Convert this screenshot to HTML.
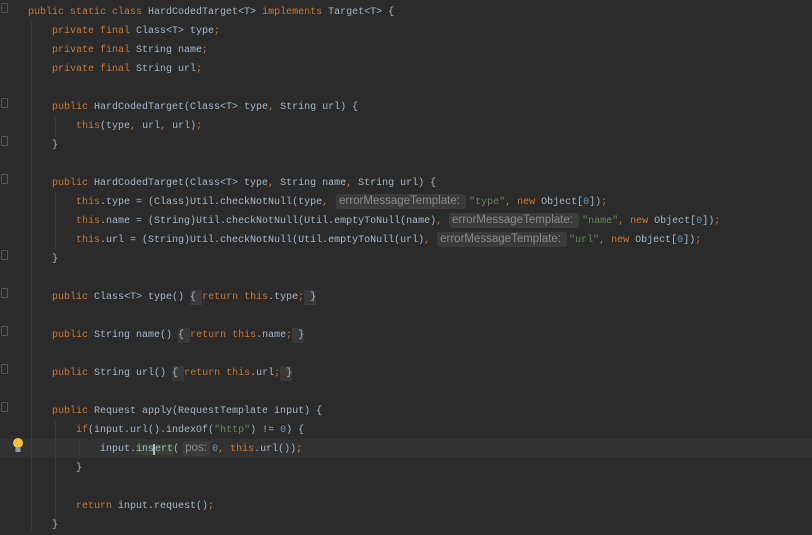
<!DOCTYPE html>
<html><head><style>
body{margin:0;width:812px;height:530px;background:#2b2b2b;overflow:hidden;position:relative;font-family:"Liberation Mono",monospace;font-size:10px;color:#a9b7c6}
.l{position:absolute;left:28px;height:19px;line-height:19px;white-space:pre}
.k{color:#cc7832}.s{color:#6a8759}.n{color:#6897bb}
.h{display:inline-block;background:#3b3b3b;color:#8a8a8a;font-family:"Liberation Sans",sans-serif;font-size:11.5px;line-height:15px;height:15px;border-radius:3px;padding:0 3px;vertical-align:middle;text-align:left;margin:0 3px 0 2px}
.f{background:#3a3a3a;padding:2px 0}
.g{position:absolute;width:1px;background:#3a3a3a}
.fi{position:absolute;left:1px;width:5px;height:8px;border:1px solid #555;border-radius:1px}
</style></head><body>
<div style="position:absolute;left:0;top:439px;width:812px;height:19px;background:#323232"></div>
<div class="g" style="left:31px;top:22px;height:508px"></div>
<div class="g" style="left:55px;top:117px;height:20px"></div>
<div class="g" style="left:55px;top:193px;height:57px"></div>
<div class="g" style="left:55px;top:421px;height:99px"></div>
<div class="g" style="left:79px;top:440px;height:18px"></div>
<div class="fi" style="top:3px"></div><div class="fi" style="top:98px"></div><div class="fi" style="top:136px"></div><div class="fi" style="top:174px"></div><div class="fi" style="top:250px"></div><div class="fi" style="top:288px"></div><div class="fi" style="top:326px"></div><div class="fi" style="top:364px"></div><div class="fi" style="top:402px"></div>
<svg style="position:absolute;left:11px;top:437px" width="14" height="17"><circle cx="7" cy="6" r="5" fill="#f0c040"/><rect x="4.5" y="10" width="5" height="5" fill="#999"/></svg>

<div class="l" style="top:3px"><span class="k">public static class </span>HardCodedTarget&lt;T&gt; <span class="k">implements </span>Target&lt;T&gt; {</div>
<div class="l" style="top:22px">    <span class="k">private final </span>Class&lt;T&gt; type<span class="k">;</span></div>
<div class="l" style="top:41px">    <span class="k">private final </span>String name<span class="k">;</span></div>
<div class="l" style="top:60px">    <span class="k">private final </span>String url<span class="k">;</span></div>
<div class="l" style="top:98px">    <span class="k">public </span>HardCodedTarget(Class&lt;T&gt; type<span class="k">, </span>String url) {</div>
<div class="l" style="top:117px">        <span class="k">this</span>(type<span class="k">, </span>url<span class="k">, </span>url)<span class="k">;</span></div>
<div class="l" style="top:136px">    }</div>
<div class="l" style="top:174px">    <span class="k">public </span>HardCodedTarget(Class&lt;T&gt; type<span class="k">, </span>String name<span class="k">, </span>String url) {</div>
<div class="l" style="top:193px">        <span class="k">this</span>.type = (Class)Util.checkNotNull(type<span class="k">,</span> <span class="h" style="width:124px">errorMessageTemplate:</span><span class="s">"type"</span><span class="k">, new </span>Object[<span class="n">0</span>])<span class="k">;</span></div>
<div class="l" style="top:212px">        <span class="k">this</span>.name = (String)Util.checkNotNull(Util.emptyToNull(name)<span class="k">,</span> <span class="h" style="width:124px;margin-left:1px">errorMessageTemplate:</span><span class="s">"name"</span><span class="k">, new </span>Object[<span class="n">0</span>])<span class="k">;</span></div>
<div class="l" style="top:231px">        <span class="k">this</span>.url = (String)Util.checkNotNull(Util.emptyToNull(url)<span class="k">,</span> <span class="h" style="width:124px;margin-left:1px;margin-right:2px">errorMessageTemplate:</span><span class="s">"url"</span><span class="k">, new </span>Object[<span class="n">0</span>])<span class="k">;</span></div>
<div class="l" style="top:250px">    }</div>
<div class="l" style="top:288px">    <span class="k">public </span>Class&lt;T&gt; type() <span class="f">{ </span><span class="k">return this</span>.type<span class="k">;</span><span class="f"> }</span></div>
<div class="l" style="top:326px">    <span class="k">public </span>String name() <span class="f">{ </span><span class="k">return this</span>.name<span class="k">;</span><span class="f"> }</span></div>
<div class="l" style="top:364px">    <span class="k">public </span>String url() <span class="f">{ </span><span class="k">return this</span>.url<span class="k">;</span><span class="f"> }</span></div>
<div class="l" style="top:402px">    <span class="k">public </span>Request apply(RequestTemplate input) {</div>
<div class="l" style="top:421px">        <span class="k">if</span>(input.url().indexOf(<span class="s">"http"</span>) != <span class="n">0</span>) {</div>
<div class="l" style="top:440px">            input.<span style="background:#344134">ins<span style="border-left:2px solid #bbb;margin-left:-1px">ert</span></span>(<span class="h" style="width:22px;margin:0 2px 0 3px">pos:</span><span class="n">0</span><span class="k">, this</span>.url())<span class="k">;</span></div>
<div class="l" style="top:459px">        }</div>
<div class="l" style="top:497px">        <span class="k">return </span>input.request()<span class="k">;</span></div>
<div class="l" style="top:516px">    }</div>
</body></html>
